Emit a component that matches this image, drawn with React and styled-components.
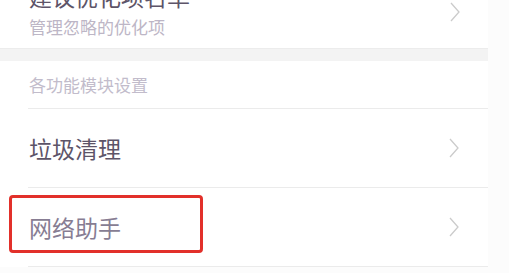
import React from 'react';
import styled, { createGlobalStyle } from 'styled-components';

// CSS
const GlobalStyle = createGlobalStyle`
  html, body {
    margin: 0;
    padding: 0;
    background: #fcfcfc;
    font-family: "Noto Sans CJK SC", "Noto Sans", sans-serif;
    overflow: hidden;
  }
`;

const Panel = styled.div`
  width: 488px;
  background: #ffffff;
  display: flex;
  flex-direction: column;
`;

// first item is scrolled partly out of view
const TopItem = styled.div`
  display: flex;
  align-items: flex-start;
  justify-content: space-between;
  margin-top: -18px;
  height: 66px;
  padding: 0 28px 0 29px;
`;

const TextBlock = styled.div`
  display: flex;
  flex-direction: column;
  gap: 6px;
`;

const Title = styled.div`
  font-size: 23px;
  line-height: 28px;
  color: #5d5468;
`;

const Sub = styled.div`
  font-size: 17px;
  line-height: 22px;
  color: #bdb6c6;
`;

const ChevronSlot = styled.div`
  margin-top: 20px;
`;

const Gap = styled.div`
  height: 12px;
  background: #f3f3f3;
  border-top: 1px solid #ececec;
`;

const SectionHead = styled.div`
  margin-left: 28px;
  height: 48px;
  padding: 0 0 5px 1px;
  display: flex;
  align-items: flex-end;
  border-bottom: 1px solid #ebebeb;
  font-size: 17px;
  line-height: 36px;
  color: #c2bccb;
  box-sizing: border-box;
`;

const Row = styled.div`
  position: relative;
  height: 79px;
  box-sizing: border-box;
  border-bottom: 1px solid #ebebeb;
  margin-left: 28px;
  padding: 0 29px 0 1px;
  display: flex;
  align-items: center;
  justify-content: space-between;
`;

const RowLabel = styled.span`
  font-size: 23px;
  color: ${({ dim }) => (dim ? '#877d93' : '#5d5468')};
`;

// red highlight box lies over the row
const Highlight = styled.div`
  position: absolute;
  left: -19px;
  top: 7px;
  width: 194px;
  height: 58px;
  box-sizing: border-box;
  border: 3px solid #e2302a;
  border-radius: 4px;
`;

const Chevron = () => (
  <svg width="10" height="20" viewBox="0 0 10 20">
    <polyline points="1,1 9,10 1,19" fill="none" stroke="#cbcbcb" strokeWidth="1.3" />
  </svg>
);

function App() {
  return (
    <>
      <GlobalStyle />
      <Panel>
        <TopItem>
          <TextBlock>
            <Title>建议优化项名单</Title>
            <Sub>管理忽略的优化项</Sub>
          </TextBlock>
          <ChevronSlot><Chevron /></ChevronSlot>
        </TopItem>
        <Gap />
        <SectionHead>各功能模块设置</SectionHead>
        <Row>
          <RowLabel>垃圾清理</RowLabel>
          <Chevron />
        </Row>
        <Row>
          <RowLabel dim>网络助手</RowLabel>
          <Chevron />
          <Highlight />
        </Row>
      </Panel>
    </>
  );
}

export default App;
